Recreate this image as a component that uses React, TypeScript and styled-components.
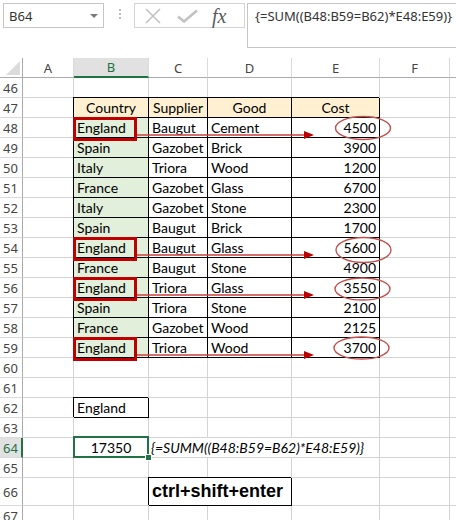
import React from "react";
import styled, { createGlobalStyle, css } from "styled-components";

const GlobalStyle = createGlobalStyle`
  html, body {
    margin: 0;
    padding: 0;
    background: #fff;
    overflow: hidden;
  }
  body {
    font-family: "Noto Sans", "Open Sans", sans-serif;
  }
`;

const Page = styled.div`
  position: relative;
  width: 456px;
  height: 520px;
  overflow: hidden;
  background: #fff;
`;

/* ---------- formula bar ---------- */

const FormulaBar = styled.div`
  display: flex;
  align-items: flex-start;
  height: 58px;
  padding: 3px 0 0 3px;
  box-sizing: border-box;
`;

const NameBox = styled.div`
  box-sizing: border-box;
  width: 101px;
  height: 25px;
  border: 1px solid #c6c6c6;
  display: flex;
  align-items: center;
  justify-content: space-between;
  padding: 0 5px 0 5px;
  font-size: 13px;
  color: #333;
`;

const DropArrow = styled.span`
  width: 0;
  height: 0;
  border-left: 4px solid transparent;
  border-right: 4px solid transparent;
  border-top: 4px solid #7a7a7a;
`;

const Dots = styled.div`
  display: flex;
  flex-direction: column;
  gap: 2px;
  margin: 6px 0 0 15px;

  span {
    width: 2px;
    height: 2px;
    background: #bdbdbd;
  }
`;

const IconBox = styled.div`
  box-sizing: border-box;
  width: 111px;
  height: 25px;
  margin-left: 13px;
  border: 1px solid #d4d4d4;
  display: flex;
  align-items: center;
  padding-left: 10px;
  gap: 16px;
`;

const Fx = styled.span`
  font-family: "Liberation Serif", serif;
  font-style: italic;
  font-size: 20px;
  color: #5a5a5a;
  line-height: 1;
  margin-left: -2px;
`;

const FormulaBox = styled.div`
  box-sizing: border-box;
  flex: 1;
  height: 45px;
  margin: 0 -20px 0 2px;
  border: 1px solid #c6c6c6;
  padding: 3px 0 0 7px;
  font-size: 13px;
  line-height: 18px;
  color: #333;
  white-space: nowrap;
`;

/* ---------- sheet ---------- */

const Sheet = styled.div`
  display: grid;
  grid-template-columns: 23px 51px 75px 59px 84px 88px 70px 60px;
  grid-template-rows: 20px repeat(20, 20px) 28px 20px;
  font-family: Lato, "Open Sans", sans-serif;
  font-size: 14px;
  color: #000;
`;

const Corner = styled.div`
  box-sizing: border-box;
  border-right: 1px solid #ababab;
  border-bottom: 1px solid #ababab;
  display: flex;
  align-items: flex-end;
  justify-content: flex-end;
  padding: 0 2px 2px 0;
`;

const ColHead = styled.div<{ $active?: boolean }>`
  box-sizing: border-box;
  border-right: 1px solid #dadada;
  border-bottom: 1px solid #ababab;
  display: flex;
  align-items: center;
  justify-content: center;
  font-family: "Noto Sans", sans-serif;
  font-size: 13px;
  color: #444;
  ${(p) =>
    p.$active &&
    css`
      background: #e1e1e1;
      border-bottom: 2px solid #217346;
      color: #217346;
    `}
`;

const RowHead = styled.div<{ $active?: boolean }>`
  box-sizing: border-box;
  border-right: 1px solid #ababab;
  border-bottom: 1px solid #dadada;
  display: flex;
  align-items: center;
  padding-left: 3px;
  font-family: "Noto Sans", sans-serif;
  font-size: 13px;
  color: #444;
  ${(p) =>
    p.$active &&
    css`
      background: #e1e1e1;
      border-right: 2px solid #217346;
      color: #217346;
    `}
`;

type Align = "left" | "right" | "center";

const Cell = styled.div<{
  $align?: Align;
  $fill?: string;
  $boxed?: boolean;
  $span?: number;
  $italic?: boolean;
  $big?: boolean;
  $selected?: boolean;
}>`
  box-sizing: border-box;
  position: relative;
  border-right: 1px solid #d4d4d4;
  border-bottom: 1px solid #d4d4d4;
  display: flex;
  align-items: center;
  padding: 0 3px;
  white-space: nowrap;
  justify-content: ${(p) =>
    p.$align === "right" ? "flex-end" : p.$align === "center" ? "center" : "flex-start"};
  background: ${(p) => p.$fill || "transparent"};
  grid-column: ${(p) => (p.$span ? `span ${p.$span}` : "auto")};
  ${(p) =>
    p.$boxed &&
    css`
      border-right-color: #000;
      border-bottom-color: #000;
      box-shadow: -1px -1px 0 #000;
    `}
  ${(p) =>
    p.$italic &&
    css`
      font-style: italic;
      padding-left: 2px;
    `}
  ${(p) =>
    p.$big &&
    css`
      font-family: "Liberation Sans", Arial, sans-serif;
      font-weight: bold;
      font-size: 18px;
      padding-left: 3px;
    `}
  ${(p) =>
    p.$selected &&
    css`
      &::after {
        content: "";
        position: absolute;
        top: -2px;
        left: -1px;
        right: -1px;
        bottom: -1px;
        border: 2px solid #217346;
      }
      &::before {
        content: "";
        position: absolute;
        right: -4px;
        bottom: -4px;
        width: 5px;
        height: 5px;
        background: #217346;
        border: 1px solid #fff;
        z-index: 2;
      }
    `}
`;

const Overlay = styled.svg`
  position: absolute;
  top: 0;
  left: 0;
  pointer-events: none;
`;

const HEAD_FILL = "#fff0d1";
const GREEN_FILL = "#e2efda";

const columns = ["A", "B", "C", "D", "E", "F", "G"];

const data: [string, string, string, number][] = [
  ["England", "Baugut", "Cement", 4500],
  ["Spain", "Gazobet", "Brick", 3900],
  ["Italy", "Triora", "Wood", 1200],
  ["France", "Gazobet", "Glass", 6700],
  ["Italy", "Gazobet", "Stone", 2300],
  ["Spain", "Baugut", "Brick", 1700],
  ["England", "Baugut", "Glass", 5600],
  ["France", "Baugut", "Stone", 4900],
  ["England", "Triora", "Glass", 3550],
  ["Spain", "Triora", "Stone", 2100],
  ["France", "Gazobet", "Wood", 2125],
  ["England", "Triora", "Wood", 3700],
];

const marked = [
  { row: 48, cx: 363, cy: 128, rx: 27.5, ry: 11.5 },
  { row: 54, cx: 363.5, cy: 250, rx: 27.5, ry: 12.5 },
  { row: 56, cx: 362.5, cy: 289, rx: 27.5, ry: 11 },
  { row: 59, cx: 361.5, cy: 348, rx: 27.5, ry: 11 },
];

const rowTop = (n: number) => 97 + (n - 47) * 20;

function Empty({ n }: { n: number }) {
  return (
    <>
      {Array.from({ length: n }).map((_, i) => (
        <Cell key={i} />
      ))}
    </>
  );
}

function renderRow(r: number) {
  const head = (
    <RowHead key={`h${r}`} $active={r === 64}>
      {r}
    </RowHead>
  );

  if (r === 47) {
    return [
      head,
      <Cell key="a" />,
      <Cell key="b" $boxed $fill={HEAD_FILL} $align="center">Country</Cell>,
      <Cell key="c" $boxed $fill={HEAD_FILL} $align="center">Supplier</Cell>,
      <Cell key="d" $boxed $fill={HEAD_FILL} $align="center">Good</Cell>,
      <Cell key="e" $boxed $fill={HEAD_FILL} $align="center">Cost</Cell>,
      <Empty key="rest" n={2} />,
    ];
  }

  if (r >= 48 && r <= 59) {
    const [country, supplier, good, cost] = data[r - 48];
    return [
      head,
      <Cell key="a" />,
      <Cell key="b" $boxed $fill={GREEN_FILL}>{country}</Cell>,
      <Cell key="c" $boxed>{supplier}</Cell>,
      <Cell key="d" $boxed>{good}</Cell>,
      <Cell key="e" $boxed $align="right">{cost}</Cell>,
      <Empty key="rest" n={2} />,
    ];
  }

  if (r === 62) {
    return [head, <Cell key="a" />, <Cell key="b" $boxed>England</Cell>, <Empty key="rest" n={5} />];
  }

  if (r === 64) {
    return [
      head,
      <Cell key="a" />,
      <Cell key="b" $align="center" $selected>17350</Cell>,
      <Cell key="c" $span={3} $italic>
        {"{=SUMM((B48:B59=B62)*E48:E59)}"}
      </Cell>,
      <Empty key="rest" n={2} />,
    ];
  }

  if (r === 66) {
    return [
      head,
      <Empty key="ab" n={2} />,
      <Cell key="c" $span={2} $boxed $big>ctrl+shift+enter</Cell>,
      <Empty key="rest" n={3} />,
    ];
  }

  return [head, <Empty key="rest" n={7} />];
}

export default function App() {
  const rows = Array.from({ length: 22 }, (_, i) => 46 + i);

  return (
    <Page>
      <GlobalStyle />
      <FormulaBar>
        <NameBox>
          <span>B64</span>
          <DropArrow />
        </NameBox>
        <Dots>
          <span />
          <span />
          <span />
        </Dots>
        <IconBox>
          <svg width="16" height="16" viewBox="0 0 16 16">
            <path d="M1 1 L15 15 M15 1 L1 15" stroke="#c2c2c2" strokeWidth="1.6" fill="none" />
          </svg>
          <svg width="21" height="14" viewBox="0 0 21 14">
            <path d="M1 7.5 L7 12.5 L20 1.5" stroke="#c2c2c2" strokeWidth="2.6" fill="none" />
          </svg>
          <Fx>fx</Fx>
        </IconBox>
        <FormulaBox>{"{=SUM((B48:B59=B62)*E48:E59)}"}</FormulaBox>
      </FormulaBar>

      <Sheet>
        <Corner>
          <svg width="14" height="14" viewBox="0 0 14 14">
            <polygon points="14,0 14,14 0,14" fill="#dcdcdc" />
          </svg>
        </Corner>
        {columns.map((c) => (
          <ColHead key={c} $active={c === "B"}>
            {c}
          </ColHead>
        ))}
        {rows.map((r) => (
          <React.Fragment key={r}>{renderRow(r)}</React.Fragment>
        ))}
      </Sheet>

      <Overlay width="456" height="520" viewBox="0 0 456 520">
        {marked.map((m) => {
          const t = rowTop(m.row);
          const y = t + 18;
          return (
            <g key={m.row}>
              <rect x="74.5" y={t + 1.5} width="61" height="21" fill="none" stroke="#c00000" strokeWidth="3" />
              <line x1="137" y1={y} x2="306" y2={y} stroke="#c8403c" strokeWidth="1.5" />
              <polygon points={`304,${y - 4} 314,${y} 304,${y + 4}`} fill="#c00000" />
              <ellipse cx={m.cx} cy={m.cy} rx={m.rx} ry={m.ry} fill="none" stroke="#c0504d" strokeWidth="1.4" />
            </g>
          );
        })}
      </Overlay>
    </Page>
  );
}
